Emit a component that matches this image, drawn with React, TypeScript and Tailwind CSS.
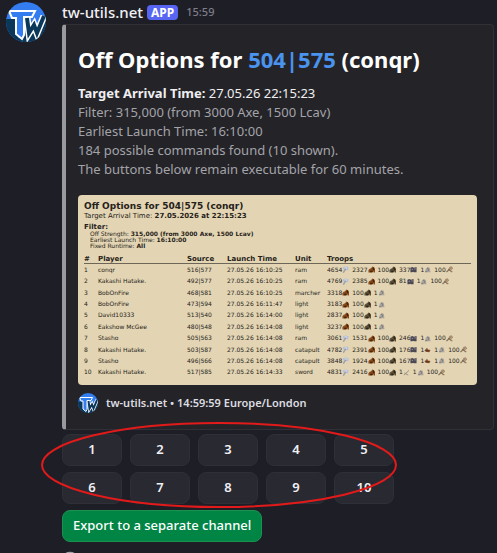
import React from 'react';
import { Eye } from 'lucide-react';

type Troop = [number, string];

interface Command {
  player: string;
  source: string;
  launch: string;
  unit: string;
  troops: Troop[];
}

const COMMANDS: Command[] = [
  { player: 'conqr',           source: '516|577', launch: '27.05.26 16:10:25', unit: 'ram',      troops: [[4654, 'axe'], [2327, 'light'], [100, 'heavy'], [337, 'ram'], [1, 'snob'], [100, 'spy']] },
  { player: 'Kakashi Hatake.', source: '492|577', launch: '27.05.26 16:10:25', unit: 'ram',      troops: [[4769, 'axe'], [2385, 'light'], [100, 'heavy'], [81, 'ram'], [1, 'snob'], [100, 'spy']] },
  { player: 'BobOnFire',       source: '468|581', launch: '27.05.26 16:10:25', unit: 'marcher',  troops: [[3318, 'light'], [100, 'heavy'], [1, 'snob']] },
  { player: 'BobOnFire',       source: '473|594', launch: '27.05.26 16:11:47', unit: 'light',    troops: [[3183, 'light'], [100, 'heavy'], [1, 'snob']] },
  { player: 'David10333',      source: '513|540', launch: '27.05.26 16:14:00', unit: 'light',    troops: [[2837, 'light'], [100, 'heavy'], [1, 'snob']] },
  { player: 'Eakshow McGee',   source: '480|548', launch: '27.05.26 16:14:08', unit: 'light',    troops: [[3237, 'light'], [100, 'heavy'], [1, 'snob']] },
  { player: 'Stasho',          source: '505|563', launch: '27.05.26 16:14:08', unit: 'ram',      troops: [[3061, 'axe'], [1531, 'light'], [100, 'heavy'], [246, 'ram'], [1, 'snob'], [100, 'spy']] },
  { player: 'Kakashi Hatake.', source: '503|587', launch: '27.05.26 16:14:08', unit: 'catapult', troops: [[4782, 'axe'], [2391, 'light'], [100, 'heavy'], [176, 'ram'], [1, 'catapult'], [1, 'snob'], [100, 'spy']] },
  { player: 'Stasho',          source: '496|566', launch: '27.05.26 16:14:08', unit: 'catapult', troops: [[3848, 'axe'], [1924, 'light'], [100, 'heavy'], [167, 'ram'], [1, 'catapult'], [1, 'snob'], [100, 'spy']] },
  { player: 'Kakashi Hatake.', source: '517|585', launch: '27.05.26 16:14:33', unit: 'sword',    troops: [[4831, 'axe'], [2416, 'light'], [100, 'heavy'], [1, 'sword'], [1, 'snob'], [100, 'spy']] },
];

function Horse({ coat, shade }: { coat: string; shade: string }) {
  return (
    <>
      <path d="M1 15V9l3-3 3-1 3-4 4 2 2 4v8h-3l-1-3-3 3z" fill={coat} />
      <path d="M10 5l3-2 2 5-3 2zM5 11l5-1 1 4H5z" fill={shade} />
    </>
  );
}

function TroopIcon({ kind }: { kind: string }) {
  return (
    <svg viewBox="0 0 16 16" className="w-[7px] h-[7px] shrink-0">
      {kind === 'axe' && (
        <>
          <path d="M2 3l6-2 7 2-1 7-5-2-5 2z" fill="#b4bdd6" />
          <path d="M3 15L9 6" stroke="#9a9cae" strokeWidth="3" />
          <path d="M6 4l6 1" stroke="#e0e5f2" strokeWidth="2" />
        </>
      )}
      {kind === 'light' && <Horse coat="#8a4a18" shade="#43240e" />}
      {kind === 'heavy' && <Horse coat="#5e4e34" shade="#2b2720" />}
      {kind === 'ram' && (
        <>
          <path d="M1 4l4-2 4 2 6-2v12H9l-2-1-2 1H1z" fill="#4b4650" />
          <path d="M4 6h3v3H4zM10 5h3v3h-3z" fill="#8a8898" />
        </>
      )}
      {kind === 'snob' && (
        <>
          <path d="M2 14l2-8 4-4 5 2 2 10z" fill="#aba49b" />
          <path d="M7 5l4 2-2 5M3 13h4" stroke="#77727a" strokeWidth="2" fill="none" />
        </>
      )}
      {kind === 'spy' && (
        <>
          <path d="M1 14L13 3M5 7l8 6" stroke="#85705a" strokeWidth="3" />
          <path d="M8 3l5-1 2 4-4 2zM11 13h4" stroke="#9a7a5c" strokeWidth="2" fill="#bfae92" />
        </>
      )}
      {kind === 'catapult' && (
        <>
          <path d="M1 10l6-6 2 4 6 1-3 5-8-1z" fill="#8a5230" />
          <path d="M4 11h8" stroke="#4e2c1a" strokeWidth="2" />
        </>
      )}
      {kind === 'sword' && <path d="M2 14L14 3M3 9l9 5" stroke="#8b8778" strokeWidth="2" />}
    </svg>
  );
}

function Logo({ className }: { className: string }) {
  return (
    <svg viewBox="0 0 40 40" className={className} role="img" aria-label="tw-utils.net">
      <clipPath id="disc">
        <circle cx="20" cy="20" r="20" />
      </clipPath>
      <g clipPath="url(#disc)">
        <rect width="40" height="40" fill="#347df0" />
        <path d="M0 17h12v23H0zM12 36l28-18v22H12z" fill="#0b3858" />
        <path d="M3 9h26l-3 6h-8v18l-2 4-6-5V16H6z" fill="#347df0" stroke="#fff" strokeWidth="2" />
        <path d="M21 16l2 15 5-8 3 8 7-17" fill="none" stroke="#fff" strokeWidth="7" />
        <path d="M21 16l2 15 5-8 3 8 7-17" fill="none" stroke="#0b3858" strokeWidth="4" />
      </g>
    </svg>
  );
}

function ReportCard() {
  return (
    <div className="mt-4 min-h-[190px] rounded bg-[#e3d5b3] px-[6px] pt-[6px] font-['DejaVu_Sans',sans-serif] text-[#26221a]">
      <h3 className="text-[9px] leading-[11px] font-bold">Off Options for 504|575 (conqr)</h3>
      <p className="text-[7px] leading-[9px]">
        Target Arrival Time: <b>27.05.2026 at 22:15:23</b>
      </p>
      <p className="mt-[2px] text-[7px] leading-[8px] font-bold">Filter:</p>
      <div className="pl-[6px] text-[6px] leading-[6px]">
        <p>Off Strength: <b>315,000 (from 3000 Axe, 1500 Lcav)</b></p>
        <p>Earliest Launch Time: <b>16:10:00</b></p>
        <p>Fixed Runtime: <b>All</b></p>
      </div>
      <table className="mt-[6px] h-[123px] w-full table-fixed border-collapse text-left text-[6px] leading-[8px] whitespace-nowrap">
        <thead>
          <tr className="border-b border-[#6e6757] text-[7px]">
            <th className="w-[14px]">#</th>
            <th className="w-[89px]">Player</th>
            <th className="w-10">Source</th>
            <th className="w-[68px]">Launch Time</th>
            <th className="w-8">Unit</th>
            <th>Troops</th>
          </tr>
        </thead>
        <tbody>
          {COMMANDS.map((command, i) => (
            <tr key={i}>
              <td>{i + 1}</td>
              <td>{command.player}</td>
              <td>{command.source}</td>
              <td>{command.launch}</td>
              <td>{command.unit}</td>
              <td>
                <div className="flex gap-[3px]">
                  {command.troops.map(([count, kind]) => (
                    <span key={kind} className="flex items-center">
                      {count}
                      <TroopIcon kind={kind} />
                    </span>
                  ))}
                </div>
              </td>
            </tr>
          ))}
        </tbody>
      </table>
    </div>
  );
}

function Embed() {
  return (
    <article className="rounded-sm border border-l-4 border-[#303036] border-l-[#989a9e] bg-[#242428] pl-3 pt-5 pb-4 pr-4">
      <h2 className="text-[22px] leading-7 font-bold text-white">
        Off Options for <a href="#504-575" className="text-[#4a93ee]">504|575</a> (conqr)
      </h2>
      <div className="mt-[11px] text-[13px] leading-[19px] text-[#a3a3a9]">
        <p className="text-[#efeff1]"><b>Target Arrival Time:</b> 27.05.26 22:15:23</p>
        <p>Filter: 315,000 (from 3000 Axe, 1500 Lcav)</p>
        <p>Earliest Launch Time: 16:10:00</p>
        <p>184 possible commands found (10 shown).</p>
        <p>The buttons below remain executable for 60 minutes.</p>
      </div>
      <ReportCard />
      <footer className="mt-2 flex items-center gap-2 text-[11px] leading-5 font-semibold text-[#dcdce0]">
        <Logo className="w-5 h-5" />
        <span>tw-utils.net • 14:59:59 Europe/London</span>
      </footer>
    </article>
  );
}

export default function App() {
  return (
    <main className="h-screen overflow-hidden bg-[#1e1e27] pl-[6px] pr-[3px] pt-[2px] font-['Noto_Sans',sans-serif]">
      <div className="flex gap-4">
        <Logo className="w-10 h-10 shrink-0" />
        <div className="min-w-0 flex-1">
          <header className="flex h-[22px] items-center gap-1 pb-[2px] text-[15px] leading-5 font-medium text-[#f0f0f2]">
            <span>tw-utils.net</span>
            <span className="rounded bg-[#5865f2] px-1 text-[12px] leading-[15px] font-bold text-white">APP</span>
            <time className="ml-1 text-[11px] text-[#7d7d87]">15:59</time>
          </header>
          <Embed />
          <div className="relative mt-1">
            <div className="grid grid-cols-[repeat(5,60px)] gap-x-2 gap-y-[6px]">
              {COMMANDS.map((_, i) => (
                <button
                  key={i}
                  className="h-8 rounded-lg border border-[#2f2f38] bg-[#292932] text-[13px] font-semibold text-[#f0f0f2]"
                >
                  {i + 1}
                </button>
              ))}
            </div>
            <svg viewBox="0 0 358 88" className="pointer-events-none absolute -top-[13px] -left-[22px] h-[88px] w-[358px]">
              <ellipse cx="179" cy="44" rx="177" ry="42" fill="none" stroke="#e21a1a" strokeWidth="2" />
            </svg>
          </div>
          <button className="mt-[6px] h-8 rounded-lg border border-[#1b9150] bg-[#008545] px-[10px] text-[13px] font-medium text-white">
            Export to a separate channel
          </button>
          <Eye size={16} className="mt-[7px] text-[#a3a3a9]" />
        </div>
      </div>
    </main>
  );
}
